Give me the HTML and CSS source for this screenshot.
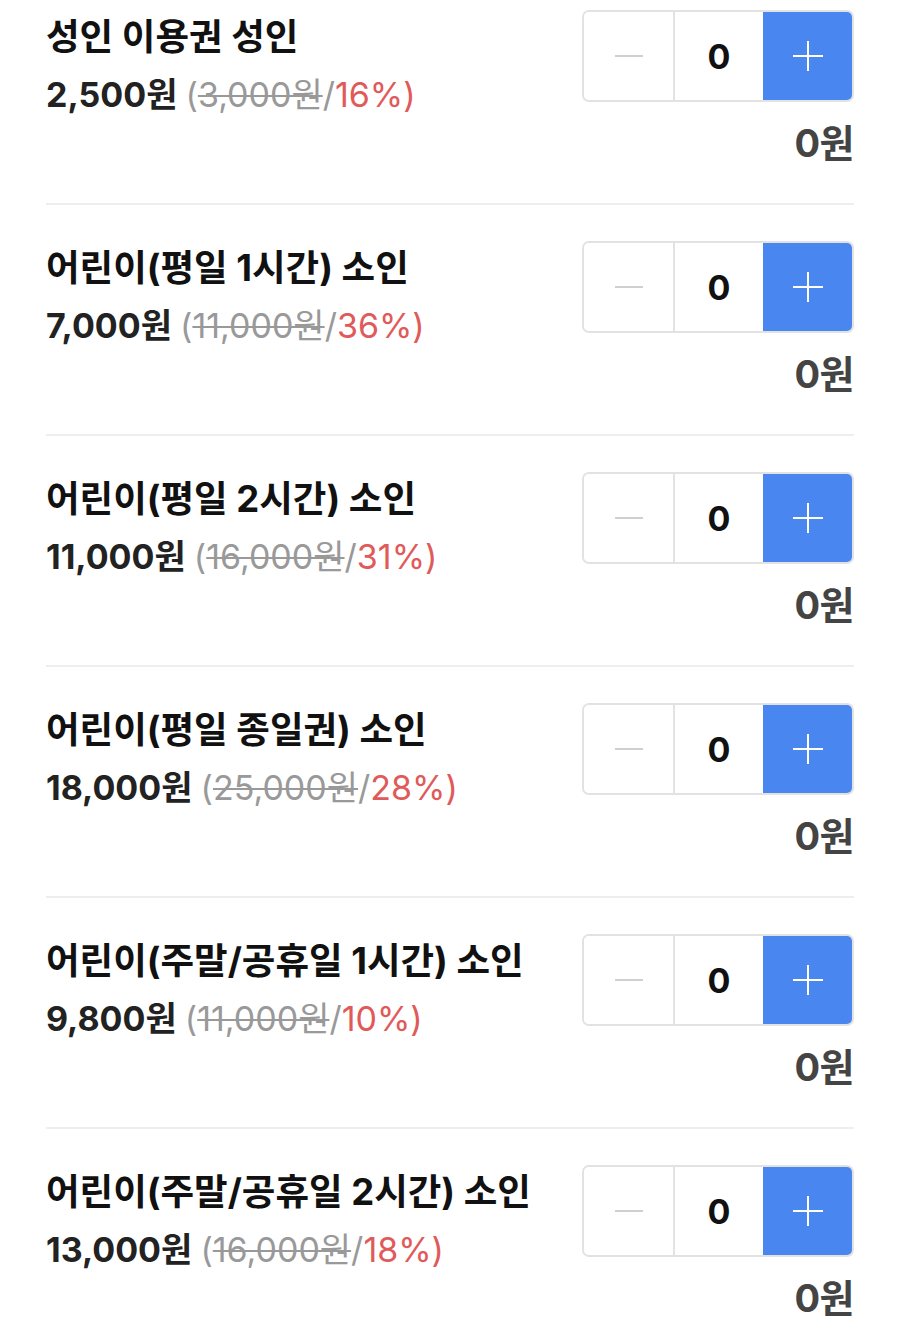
FILE: index.html
```html
<!DOCTYPE html>
<html lang="ko">
<head>
    <meta charset="UTF-8">
    <meta name="viewport" content="width=device-width, initial-scale=1.0">
    <title>이용권 선택</title>
    <link rel="stylesheet" href="styles.css">
</head>
<body>
    <div class="ticket-list">
        <div class="ticket">
            <div class="ticket-info">
                <div class="ticket-name">성인 이용권 성인</div>
                <div class="ticket-price">2,500원 <span class="origin">(<s>3,000원</s>/</span><span class="rate">16%)</span></div>
            </div>
            <div class="ticket-order">
                <div class="stepper">
                    <button class="step minus"><span class="bar"></span></button>
                    <div class="count">0</div>
                    <button class="step plus"><span class="bar"></span><span class="bar vert"></span></button>
                </div>
                <div class="total">0원</div>
            </div>
        </div>
        <div class="ticket">
            <div class="ticket-info">
                <div class="ticket-name">어린이(평일 1시간) 소인</div>
                <div class="ticket-price">7,000원 <span class="origin">(<s>11,000원</s>/</span><span class="rate">36%)</span></div>
            </div>
            <div class="ticket-order">
                <div class="stepper">
                    <button class="step minus"><span class="bar"></span></button>
                    <div class="count">0</div>
                    <button class="step plus"><span class="bar"></span><span class="bar vert"></span></button>
                </div>
                <div class="total">0원</div>
            </div>
        </div>
        <div class="ticket">
            <div class="ticket-info">
                <div class="ticket-name">어린이(평일 2시간) 소인</div>
                <div class="ticket-price">11,000원 <span class="origin">(<s>16,000원</s>/</span><span class="rate">31%)</span></div>
            </div>
            <div class="ticket-order">
                <div class="stepper">
                    <button class="step minus"><span class="bar"></span></button>
                    <div class="count">0</div>
                    <button class="step plus"><span class="bar"></span><span class="bar vert"></span></button>
                </div>
                <div class="total">0원</div>
            </div>
        </div>
        <div class="ticket">
            <div class="ticket-info">
                <div class="ticket-name">어린이(평일 종일권) 소인</div>
                <div class="ticket-price">18,000원 <span class="origin">(<s>25,000원</s>/</span><span class="rate">28%)</span></div>
            </div>
            <div class="ticket-order">
                <div class="stepper">
                    <button class="step minus"><span class="bar"></span></button>
                    <div class="count">0</div>
                    <button class="step plus"><span class="bar"></span><span class="bar vert"></span></button>
                </div>
                <div class="total">0원</div>
            </div>
        </div>
        <div class="ticket">
            <div class="ticket-info">
                <div class="ticket-name">어린이(주말/공휴일 1시간) 소인</div>
                <div class="ticket-price">9,800원 <span class="origin">(<s>11,000원</s>/</span><span class="rate">10%)</span></div>
            </div>
            <div class="ticket-order">
                <div class="stepper">
                    <button class="step minus"><span class="bar"></span></button>
                    <div class="count">0</div>
                    <button class="step plus"><span class="bar"></span><span class="bar vert"></span></button>
                </div>
                <div class="total">0원</div>
            </div>
        </div>
        <div class="ticket">
            <div class="ticket-info">
                <div class="ticket-name">어린이(주말/공휴일 2시간) 소인</div>
                <div class="ticket-price">13,000원 <span class="origin">(<s>16,000원</s>/</span><span class="rate">18%)</span></div>
            </div>
            <div class="ticket-order">
                <div class="stepper">
                    <button class="step minus"><span class="bar"></span></button>
                    <div class="count">0</div>
                    <button class="step plus"><span class="bar"></span><span class="bar vert"></span></button>
                </div>
                <div class="total">0원</div>
            </div>
        </div>
    </div>
</body>
</html>
```

FILE: styles.css
```css
* {
    margin: 0;
    padding: 0;
    box-sizing: border-box;
}

body {
    background: #fff;
    color: #111;
    font-family: Inter, 'Noto Sans CJK KR', sans-serif;
}

.ticket-list {
    padding: 0 46px;
}

.ticket {
    display: flex;
    justify-content: space-between;
    padding: 36px 0 37px;
    border-bottom: 2px solid #eeeeee;
}

.ticket:first-child {
    padding-top: 10px;
}

.ticket-name {
    font-size: 36.5px;
    font-weight: bold;
    line-height: 50px;
    padding-top: 2px;
}

.ticket-price {
    font-size: 34px;
    font-weight: bold;
    line-height: 50px;
    margin-top: 8px;
    color: #222;
}

.origin {
    font-weight: normal;
    color: #999;
}

.origin s {
    text-decoration-thickness: 2px;
}

.rate {
    font-weight: normal;
    color: #e05a5a;
}

.ticket-order {
    display: flex;
    flex-direction: column;
    align-items: flex-end;
}

.stepper {
    display: flex;
    width: 272px;
    height: 92px;
    border: 2px solid #e2e2e2;
    border-radius: 7px;
    overflow: hidden;
}

.step {
    position: relative;
    width: 90px;
    border: none;
    background: #fff;
}

.step.plus {
    background: #4a86f0;
    margin: -2px -2px -2px 0;
    width: 92px;
}

.bar {
    position: absolute;
    left: 50%;
    top: 50%;
    width: 30px;
    height: 2px;
    margin: -1px 0 0 -15px;
    background: #fff;
}

.minus .bar {
    width: 28px;
    margin-left: -14px;
    background: #d0d0d0;
}

.bar.vert {
    width: 2px;
    height: 30px;
    margin: -15px 0 0 -1px;
}

.count {
    width: 90px;
    border-left: 2px solid #e2e2e2;
    display: flex;
    align-items: center;
    justify-content: center;
    font-size: 34px;
    font-weight: bold;
    color: #111;
}

.total {
    margin-top: 18px;
    font-size: 38px;
    font-weight: bold;
    line-height: 46px;
    color: #444;
    letter-spacing: -0.5px;
}
```
